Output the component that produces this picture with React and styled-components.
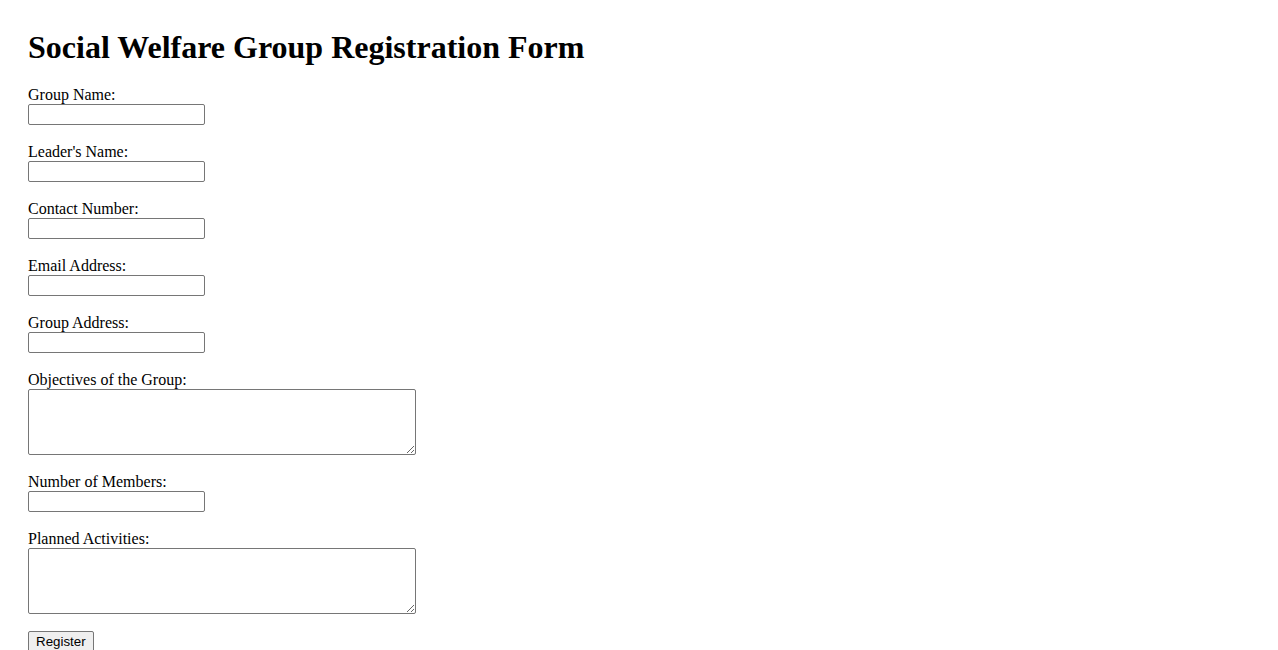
import React from 'react'
import styled, { createGlobalStyle } from 'styled-components'

const GlobalStyle = createGlobalStyle`
  body {
    margin: 8px;
    background: #fff;
    color: #000;
    font-family: "Liberation Serif", "Times New Roman", serif;
    font-size: 16px;
  }
`;

const Page = styled.div`
  padding: 21px 20px 19px;
`;

const Title = styled.h1`
  font-size: 32px;
  font-weight: 700;
  margin: 0 0 19.44px;
  line-height: normal;
`;

const Form = styled.form`
  display: flex;
  flex-direction: column;
  align-items: flex-start;
`;

const Field = styled.div`
  display: flex;
  flex-direction: column;
  align-items: flex-start;
  margin-bottom: 17.6px;
`;

const Label = styled.label`
  display: block;
  line-height: 20.4px;
  height: 18.4px;
`;

const Input = styled.input`
  box-sizing: border-box;
  width: 177px;
  height: 21px;
  margin: 0;
  padding: 1px 2px;
  border: 1px solid #767676;
  border-radius: 2px;
  background: #fff;
  font-family: "Liberation Sans", Arial, sans-serif;
  font-size: 13.33px;
`;

const TextArea = styled.textarea`
  box-sizing: border-box;
  width: 388px;
  height: 66px;
  margin: 0;
  padding: 2px;
  border: 1px solid #767676;
  border-radius: 2px;
  background: #fff;
  font-family: "Liberation Mono", monospace;
  font-size: 13.33px;
`;

const Button = styled.button`
  box-sizing: border-box;
  height: 21px;
  padding: 1px 7px;
  margin: 0;
  border: 1px solid #767676;
  border-radius: 2px;
  background: #efefef;
  color: #000;
  font-family: "Liberation Sans", Arial, sans-serif;
  font-size: 13.33px;
  line-height: 17px;
`;

const fields = [
  { id: 'groupName', label: 'Group Name:' },
  { id: 'leaderName', label: "Leader's Name:" },
  { id: 'contact', label: 'Contact Number:', type: 'tel' },
  { id: 'email', label: 'Email Address:', type: 'email' },
  { id: 'address', label: 'Group Address:' },
  { id: 'objectives', label: 'Objectives of the Group:', area: true },
  { id: 'members', label: 'Number of Members:' },
  { id: 'activities', label: 'Planned Activities:', area: true },
];

function App() {
  return (
    <Page>
      <GlobalStyle />
      <Title>Social Welfare Group Registration Form</Title>
      <Form onSubmit={(e) => e.preventDefault()}>
        {fields.map((f) => (
          <Field key={f.id}>
            <Label htmlFor={f.id}>{f.label}</Label>
            {f.area
              ? <TextArea id={f.id} />
              : <Input id={f.id} type={f.type || 'text'} />}
          </Field>
        ))}
        <Button type="submit">Register</Button>
      </Form>
    </Page>
  )
}

export default App
